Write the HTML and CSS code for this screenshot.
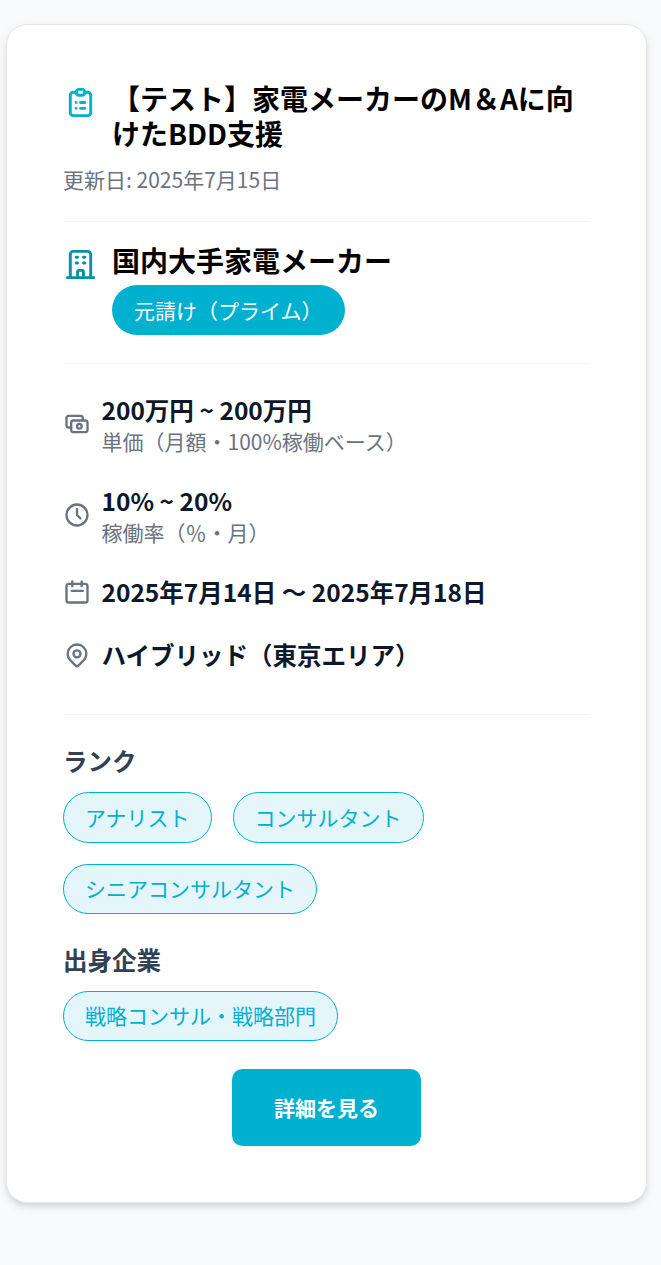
FILE: index.html
```
<!DOCTYPE html>
<html lang="ja">
<head>
<meta charset="utf-8">
<title>案件カード</title>
<link rel="stylesheet" href="styles.css">
</head>
<body>
<article class="card">
  <header class="head">
    <svg class="icon-lg cyan" viewBox="0 0 24 24"><path d="M9 5H7a2 2 0 0 0-2 2v12a2 2 0 0 0 2 2h10a2 2 0 0 0 2-2V7a2 2 0 0 0-2-2h-2"/><rect x="9" y="3" width="6" height="4" rx="2"/><path d="M9 12h.01M12 12h3M9 16h.01M12 16h3"/></svg>
    <h2 class="title">【テスト】家電メーカーのM＆Aに向けたBDD支援</h2>
  </header>
  <p class="updated">更新日: 2025年7月15日</p>
  <section class="client">
    <svg class="icon-lg teal" viewBox="0 0 24 24"><path d="M3 21h18M5 21V5a2 2 0 0 1 2-2h10a2 2 0 0 1 2 2v16M9 7h1M14 7h1M9 11h1M14 11h1M10 21v-4a1 1 0 0 1 1-1h2a1 1 0 0 1 1 1v4"/></svg>
    <div class="client-body">
      <h3 class="title">国内大手家電メーカー</h3>
      <span class="badge">元請け（プライム）</span>
    </div>
  </section>
  <section class="facts">
    <div class="fact">
      <svg class="icon" viewBox="0 0 24 24"><rect x="7" y="9" width="14" height="10" rx="2"/><circle cx="14" cy="14" r="2"/><path d="M17 9V7a2 2 0 0 0-2-2H5a2 2 0 0 0-2 2v6a2 2 0 0 0 2 2h2"/></svg>
      <div><p class="value">200万円 ~ 200万円</p><p class="note">単価（月額・100%稼働ベース）</p></div>
    </div>
    <div class="fact">
      <svg class="icon" viewBox="0 0 24 24"><circle cx="12" cy="12" r="9"/><path d="M12 7v5l3 3"/></svg>
      <div><p class="value">10% ~ 20%</p><p class="note">稼働率（％・月）</p></div>
    </div>
    <div class="fact">
      <svg class="icon" viewBox="0 0 24 24"><rect x="3" y="5" width="18" height="16" rx="2"/><path d="M8 3v4M16 3v4M7.5 11h9.5"/></svg>
      <p class="value">2025年7月14日 〜 2025年7月18日</p>
    </div>
    <div class="fact">
      <svg class="icon" viewBox="0 0 24 24"><circle cx="12" cy="11" r="3"/><path d="M17.657 16.657 13.414 20.9a2 2 0 0 1-2.827 0l-4.244-4.243a8 8 0 1 1 11.314 0z"/></svg>
      <p class="value">ハイブリッド（東京エリア）</p>
    </div>
  </section>
  <section class="group">
    <h4 class="label">ランク</h4>
    <div class="tags"><span class="tag">アナリスト</span><span class="tag">コンサルタント</span><span class="tag">シニアコンサルタント</span></div>
  </section>
  <section class="group">
    <h4 class="label">出身企業</h4>
    <div class="tags"><span class="tag">戦略コンサル・戦略部門</span></div>
  </section>
  <div class="actions"><button class="button">詳細を見る</button></div>
</article>
</body>
</html>
```

FILE: styles.css
```
* { box-sizing: border-box; margin: 0; padding: 0; }
body { background: #f8fafc; color: #000; font-family: "Noto Sans CJK JP", sans-serif; padding: 24px 14px 62px 6px; }
.card { height: 1179px; background: #fff; border: 1px solid #e5e7eb; border-radius: 21px; padding: 56px; box-shadow: 0 4px 12px -1px rgba(0,0,0,.1), 0 4px 6px -2px rgba(0,0,0,.1); }
svg { flex: none; fill: none; stroke: currentColor; stroke-width: 2; stroke-linecap: round; stroke-linejoin: round; }
.icon-lg { width: 35px; height: 35px; margin-top: 3.5px; }
.cyan { color: #00b0cf; }
.teal { color: #0891a5; }
.icon { width: 28px; height: 28px; color: #6b7280; }
.head { display: flex; gap: 14px; }
.title { font-size: 28px; line-height: 35px; font-weight: 600; }
.updated { margin-top: 14px; font-size: 21px; line-height: 28px; color: #6b7280; }
.client { display: flex; gap: 14px; margin-top: 28px; padding: 21px 0 28px; border-top: 1px solid #f3f4f6; border-bottom: 1px solid #f3f4f6; }
.badge { display: block; width: fit-content; margin-top: 7px; padding: 11px 22px; border-radius: 25px; background: #00b0cf; color: #fff; font-size: 21px; line-height: 28px; }
.facts { display: flex; flex-direction: column; gap: 28px; padding: 28px 0 42.3px; border-bottom: 1px solid #f3f4f6; }
.fact { display: flex; align-items: center; gap: 10.5px; }
.value { font-size: 24.5px; line-height: 35px; font-weight: 600; color: #0f172a; }
.note { font-size: 21px; line-height: 28px; color: #6b7280; }
.group { margin-top: 28px; }
.label { margin-bottom: 14px; font-size: 24.5px; line-height: 35px; font-weight: 600; color: #334155; }
.tags { display: flex; flex-wrap: wrap; gap: 21px; }
.tag { padding: 9.625px 21px 10.625px; border: 1px solid #00b0cf; border-radius: 26px; background: #e5f6fb; color: #00b0cf; font-size: 21px; line-height: 28px; }
.actions { display: flex; justify-content: center; margin-top: 28px; }
.button { height: 77px; padding: 0 42px 2px; border: 0; border-radius: 10.5px; background: #00b0cf; color: #fff; font: 600 21px/28px "Noto Sans CJK JP", sans-serif; }
```
